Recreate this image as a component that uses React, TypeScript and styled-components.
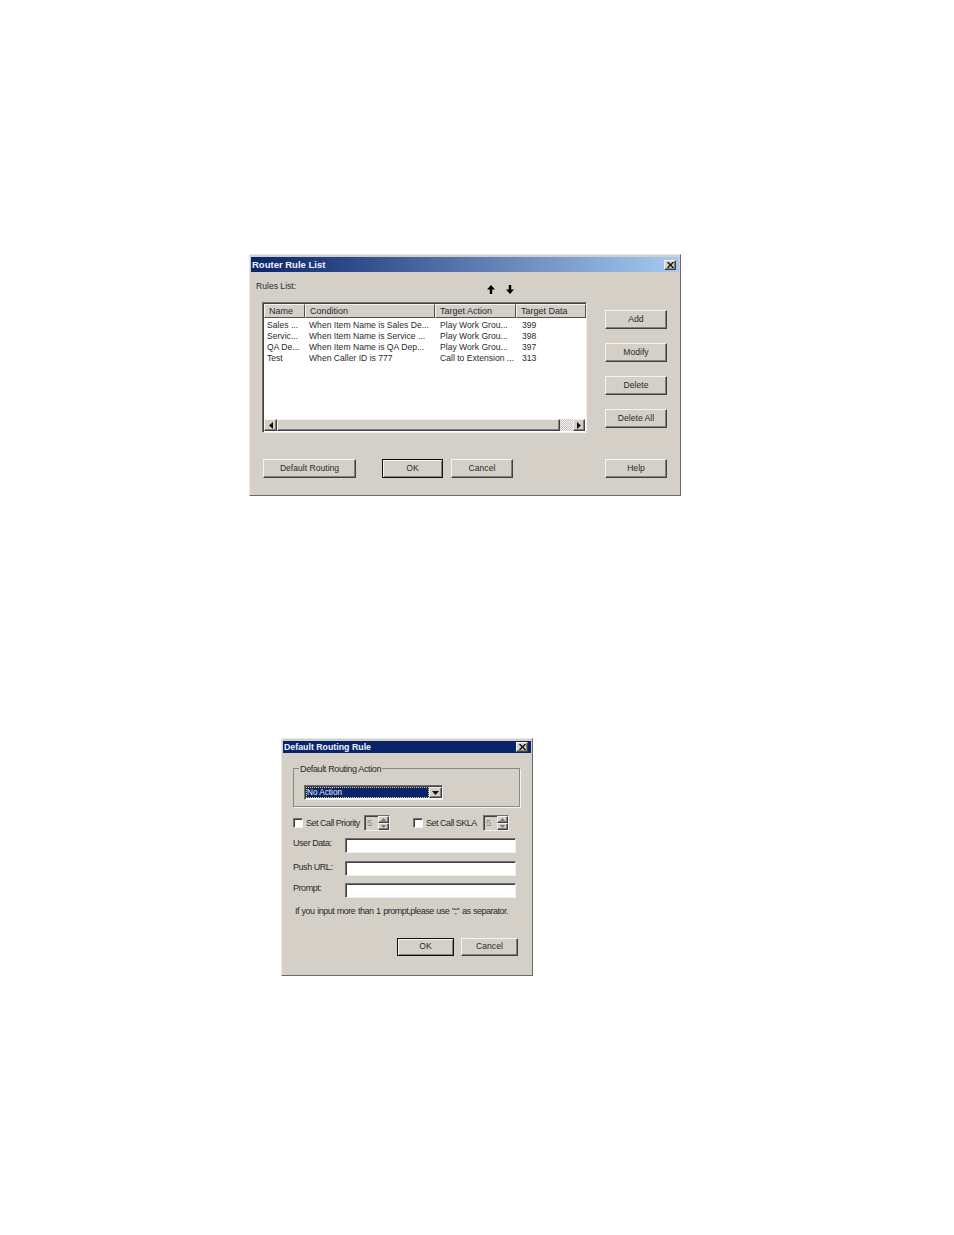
import React from "react";
import styled, { createGlobalStyle, css } from "styled-components";

const Global = createGlobalStyle`
  html, body { margin: 0; padding: 0; background: #fff; }
  body { font-family: "Liberation Sans", Arial, sans-serif; font-size: 8.6px; color: #2a2a2a; }
`;

const Page = styled.div`
  width: 954px;
  height: 1235px;
  padding-top: 254px;
  box-sizing: border-box;
  display: flex;
  flex-direction: column;
`;

const raised = css`
  background: #d4d0c8;
  border: 1px solid;
  border-color: #f4f3f0 #404040 #404040 #f4f3f0;
  box-shadow: inset -1px -1px 0 #808080;
`;

const sunken = css`
  border: 1px solid;
  border-color: #707070 #f0f0f0 #f0f0f0 #707070;
  box-shadow: inset 1px 1px 0 #404040;
`;

const Window = styled.section<{ $w: number; $h: number; $left: number; $top?: number }>`
  background: #d4d0c8;
  border: 1px solid;
  border-color: #e8e7e3 #6a6a6a #6a6a6a #e8e7e3;
  box-sizing: border-box;
  width: ${(p) => p.$w}px;
  height: ${(p) => p.$h}px;
  margin-left: ${(p) => p.$left}px;
  margin-top: ${(p) => p.$top ?? 0}px;
  padding: 2px 1px 0 1px;
  display: flex;
  flex-direction: column;
`;

const TitleBar = styled.header<{ $gradient?: boolean; $h: number; $size: number }>`
  height: ${(p) => p.$h}px;
  flex: none;
  display: flex;
  align-items: center;
  justify-content: space-between;
  padding: 0 3px 0 1px;
  background: ${(p) => (p.$gradient ? "linear-gradient(90deg, #0a246a, #a6caf0)" : "#0a246a")};
  color: #f2f4fa;
  font-weight: 700;
  font-size: ${(p) => p.$size}px;
`;

const CloseBox = styled.span`
  ${raised}
  box-sizing: border-box;
  width: 12px;
  height: 10px;
  display: flex;
  align-items: center;
  justify-content: center;
`;

const Close = () => (
  <CloseBox>
    <svg width="7" height="6" viewBox="0 0 7 6">
      <path d="M0.5 0 L6.5 6 M6.5 0 L0.5 6" stroke="#111" strokeWidth="1.4" />
    </svg>
  </CloseBox>
);

const RuleBody = styled.div`
  flex: 1;
  display: flex;
  flex-direction: column;
  padding: 0 12px 0 5px;
`;

const TopLine = styled.div`
  height: 30px;
  flex: none;
  display: flex;
  align-items: center;
  box-sizing: border-box;
`;

const RulesLabel = styled.span`
  width: 231px;
  padding-bottom: 2px;
`;

const Arrows = styled.div`
  display: flex;
  gap: 11px;
  padding-top: 5px;
`;

const ArrowSvg = styled.svg<{ $down?: boolean }>`
  transform: ${(p) => (p.$down ? "rotate(180deg)" : "none")};
`;

const Arrow = ({ down }: { down?: boolean }) => (
  <ArrowSvg $down={down} width="8" height="9" viewBox="0 0 8 9">
    <path d="M4 0 L8 4.5 H5.2 V9 H2.8 V4.5 H0 Z" fill="#000" />
  </ArrowSvg>
);

const MainRow = styled.div`
  display: flex;
  padding-left: 6px;
`;

const ListBox = styled.div`
  ${sunken}
  width: 325px;
  height: 131px;
  box-sizing: border-box;
  background: #fff;
  padding: 1px 0 0 1px;
  display: flex;
  flex-direction: column;
  flex: none;
`;

const cols = "41px 130px 81px 1fr";

const ListHead = styled.div`
  display: grid;
  grid-template-columns: ${cols};
  height: 14px;
  flex: none;
`;

const HeadCell = styled.div`
  background: #d4d0c8;
  border: 1px solid;
  border-color: #f4f3f0 #505050 #505050 #f4f3f0;
  box-sizing: border-box;
  padding-left: 4px;
  line-height: 12px;
  font-size: 9px;
  white-space: nowrap;
  overflow: hidden;
`;

const ListRows = styled.div`
  flex: 1;
  padding-top: 2px;
`;

const ListRow = styled.div`
  display: grid;
  grid-template-columns: ${cols};
  height: 11px;
  line-height: 11px;
`;

const Cell = styled.div<{ $pad: number }>`
  padding-left: ${(p) => p.$pad}px;
  white-space: nowrap;
`;

const HScroll = styled.div`
  height: 12px;
  flex: none;
  display: flex;
  margin: 0 1px 1px 0;
  background: #d4d0c8;
`;

const ScrollBtn = styled.span<{ $w: number }>`
  ${raised}
  box-sizing: border-box;
  width: ${(p) => p.$w}px;
  flex: none;
  display: flex;
  align-items: center;
  justify-content: center;
`;

const ScrollThumb = styled.span`
  ${raised}
  box-sizing: border-box;
  flex: 1;
`;

const ScrollTrack = styled.span`
  width: 13px;
  flex: none;
  background: repeating-conic-gradient(#f4f3f0 0 25%, #c8c5bd 0 50%) 0 0 / 2px 2px;
`;

const SideButtons = styled.div`
  margin-left: 18px;
  padding-top: 8px;
  display: flex;
  flex-direction: column;
  gap: 14px;
`;

const Button = styled.button<{ $w: number; $h?: number; $default?: boolean }>`
  ${raised}
  ${(p) =>
    p.$default &&
    css`
      border-color: #111;
      box-shadow: inset 1px 1px 0 #f4f3f0, inset -1px -1px 0 #808080;
    `}
  width: ${(p) => p.$w}px;
  height: ${(p) => p.$h ?? 19}px;
  box-sizing: border-box;
  padding: 0 0 2px 0;
  font: inherit;
  color: inherit;
  flex: none;
`;

const BottomRow = styled.div`
  display: flex;
  padding: 26px 0 0 7px;
`;

const BottomGap = styled.span<{ $w: number }>`
  width: ${(p) => p.$w}px;
  flex: none;
`;

const TriLeft = () => (
  <svg width="4" height="7" viewBox="0 0 4 7">
    <path d="M4 0 V7 L0 3.5 Z" fill="#111" />
  </svg>
);

const TriRight = () => (
  <svg width="4" height="7" viewBox="0 0 4 7">
    <path d="M0 0 V7 L4 3.5 Z" fill="#111" />
  </svg>
);

/* second dialog */

const RoutingBody = styled.div`
  flex: 1;
  display: flex;
  flex-direction: column;
  padding: 9px 11px 0 10px;
  font-size: 9px;
`;

const GroupBox = styled.fieldset`
  margin: 0;
  padding: 11px 0 0 10px;
  height: 45px;
  box-sizing: border-box;
  border: 1px solid #8a8880;
  box-shadow: 1px 1px 0 #f4f3f0;
  min-width: 0;
  flex: none;
`;

const GroupLegend = styled.legend`
  padding: 2px 1px 0;
  margin-left: -5px;
  font-size: 9px;
  letter-spacing: -0.36px;
  line-height: 10px;
`;

const Select = styled.div`
  ${sunken}
  background: #fff;
  width: 139px;
  height: 15px;
  box-sizing: border-box;
  display: flex;
  padding: 1px 0 1px 1px;
`;

const SelectValue = styled.div`
  flex: 1;
  background: #0a246a;
  color: #e8ecf6;
  outline: 1px dotted #e8d080;
  outline-offset: -1px;
  line-height: 12px;
  padding-left: 1px;
  font-size: 8.2px;
`;

const SelectButton = styled.span`
  ${raised}
  box-sizing: border-box;
  width: 13px;
  flex: none;
  display: flex;
  align-items: center;
  justify-content: center;
`;

const CheckLine = styled.div`
  display: flex;
  align-items: center;
  margin-top: 10px;
  height: 12px;
  flex: none;
`;

const CheckBox = styled.span`
  ${sunken}
  background: #fff;
  width: 10px;
  height: 10px;
  box-sizing: border-box;
  flex: none;
  margin-right: 3px;
`;

const CheckLabel = styled.span<{ $w: number }>`
  width: ${(p) => p.$w}px;
  flex: none;
  white-space: nowrap;
  font-size: 9px;
  letter-spacing: -0.48px;
`;

const Spin = styled.div`
  ${sunken}
  box-sizing: border-box;
  width: 26px;
  height: 16px;
  background: #d4d0c8;
  display: flex;
  flex: none;
  color: #888;
  padding-left: 2px;
  line-height: 13px;
  font-size: 9.5px;
`;

const SpinValue = styled.span`
  flex: 1;
`;

const SpinArrows = styled.span`
  width: 11px;
  flex: none;
  display: flex;
  flex-direction: column;
`;

const SpinArrow = styled.span`
  ${raised}
  box-sizing: border-box;
  flex: 1;
  display: flex;
  align-items: center;
  justify-content: center;
`;

const CheckGap = styled.span`
  width: 23px;
  flex: none;
`;

const FieldStack = styled.div`
  display: grid;
  grid-template-columns: 52px 171px;
  grid-template-rows: 15px 15px 15px;
  row-gap: 7.5px;
  margin-top: 9px;
  flex: none;
`;

const FieldLabel = styled.label<{ $drop?: number }>`
  white-space: nowrap;
  line-height: 11px;
  letter-spacing: -0.45px;
  margin-top: ${(p) => p.$drop ?? 0}px;
`;

const FieldInput = styled.div`
  ${sunken}
  height: 15px;
  box-sizing: border-box;
  background: #fff;
`;

const Note = styled.p`
  margin: 8px 0 0 2px;
  font-size: 9px;
  letter-spacing: -0.5px;
  word-spacing: 0.6px;
  line-height: 10px;
  white-space: nowrap;
  flex: none;
`;

const RoutingActions = styled.div`
  display: flex;
  justify-content: flex-end;
  gap: 7px;
  margin-top: 22px;
  margin-right: 2px;
  font-size: 8.6px;
`;

const rows = [
  ["Sales ...", "When Item Name is Sales De...", "Play Work Grou...", "399"],
  ["Servic...", "When Item Name is Service ...", "Play Work Grou...", "398"],
  ["QA De...", "When Item Name is QA Dep...", "Play Work Grou...", "397"],
  ["Test", "When Caller ID is 777", "Call to Extension ...", "313"],
];

const SpinTri = ({ up }: { up?: boolean }) => (
  <svg width="5" height="3" viewBox="0 0 5 3">
    <path d={up ? "M2.5 0 L5 3 H0 Z" : "M0 0 H5 L2.5 3 Z"} fill="#777" />
  </svg>
);

const SpinBox = () => (
  <Spin>
    <SpinValue>5</SpinValue>
    <SpinArrows>
      <SpinArrow>
        <SpinTri up />
      </SpinArrow>
      <SpinArrow>
        <SpinTri />
      </SpinArrow>
    </SpinArrows>
  </Spin>
);

export default function App() {
  return (
    <Page>
      <Global />
      <Window $w={432} $h={242} $left={249}>
        <TitleBar $gradient $h={15} $size={9.5}>
          <span>Router Rule List</span>
          <Close />
        </TitleBar>
        <RuleBody>
          <TopLine>
            <RulesLabel>Rules List:</RulesLabel>
            <Arrows>
              <Arrow />
              <Arrow down />
            </Arrows>
          </TopLine>
          <MainRow>
            <ListBox>
              <ListHead>
                <HeadCell>Name</HeadCell>
                <HeadCell>Condition</HeadCell>
                <HeadCell>Target Action</HeadCell>
                <HeadCell>Target Data</HeadCell>
              </ListHead>
              <ListRows>
                {rows.map((r) => (
                  <ListRow key={r[0]}>
                    <Cell $pad={3}>{r[0]}</Cell>
                    <Cell $pad={4}>{r[1]}</Cell>
                    <Cell $pad={5}>{r[2]}</Cell>
                    <Cell $pad={6}>{r[3]}</Cell>
                  </ListRow>
                ))}
              </ListRows>
              <HScroll>
                <ScrollBtn $w={13}>
                  <TriLeft />
                </ScrollBtn>
                <ScrollThumb />
                <ScrollTrack />
                <ScrollBtn $w={12}>
                  <TriRight />
                </ScrollBtn>
              </HScroll>
            </ListBox>
            <SideButtons>
              <Button $w={62}>Add</Button>
              <Button $w={62}>Modify</Button>
              <Button $w={62}>Delete</Button>
              <Button $w={62}>Delete All</Button>
            </SideButtons>
          </MainRow>
          <BottomRow>
            <Button $w={93}>Default Routing</Button>
            <BottomGap $w={26} />
            <Button $w={61} $default>OK</Button>
            <BottomGap $w={8} />
            <Button $w={62}>Cancel</Button>
            <BottomGap $w={92} />
            <Button $w={62}>Help</Button>
          </BottomRow>
        </RuleBody>
      </Window>

      <Window $w={252} $h={238} $left={281} $top={242}>
        <TitleBar $h={12} $size={8.8}>
          <span>Default Routing Rule</span>
          <Close />
        </TitleBar>
        <RoutingBody>
          <GroupBox>
            <GroupLegend>Default Routing Action</GroupLegend>
            <Select>
              <SelectValue>No Action</SelectValue>
              <SelectButton>
                <svg width="7" height="4" viewBox="0 0 7 4">
                  <path d="M0 0 H7 L3.5 4 Z" fill="#111" />
                </svg>
              </SelectButton>
            </Select>
          </GroupBox>
          <CheckLine>
            <CheckBox />
            <CheckLabel $w={58}>Set Call Priority</CheckLabel>
            <SpinBox />
            <CheckGap />
            <CheckBox />
            <CheckLabel $w={57}>Set Call SKLA</CheckLabel>
            <SpinBox />
          </CheckLine>
          <FieldStack>
            <FieldLabel>User Data:</FieldLabel>
            <FieldInput />
            <FieldLabel $drop={1}>Push URL:</FieldLabel>
            <FieldInput />
            <FieldLabel>Prompt:</FieldLabel>
            <FieldInput />
          </FieldStack>
          <Note>If you input more than 1 prompt,please use ";" as separator.</Note>
          <RoutingActions>
            <Button $w={57} $h={18} $default>OK</Button>
            <Button $w={57} $h={18}>Cancel</Button>
          </RoutingActions>
        </RoutingBody>
      </Window>
    </Page>
  );
}
